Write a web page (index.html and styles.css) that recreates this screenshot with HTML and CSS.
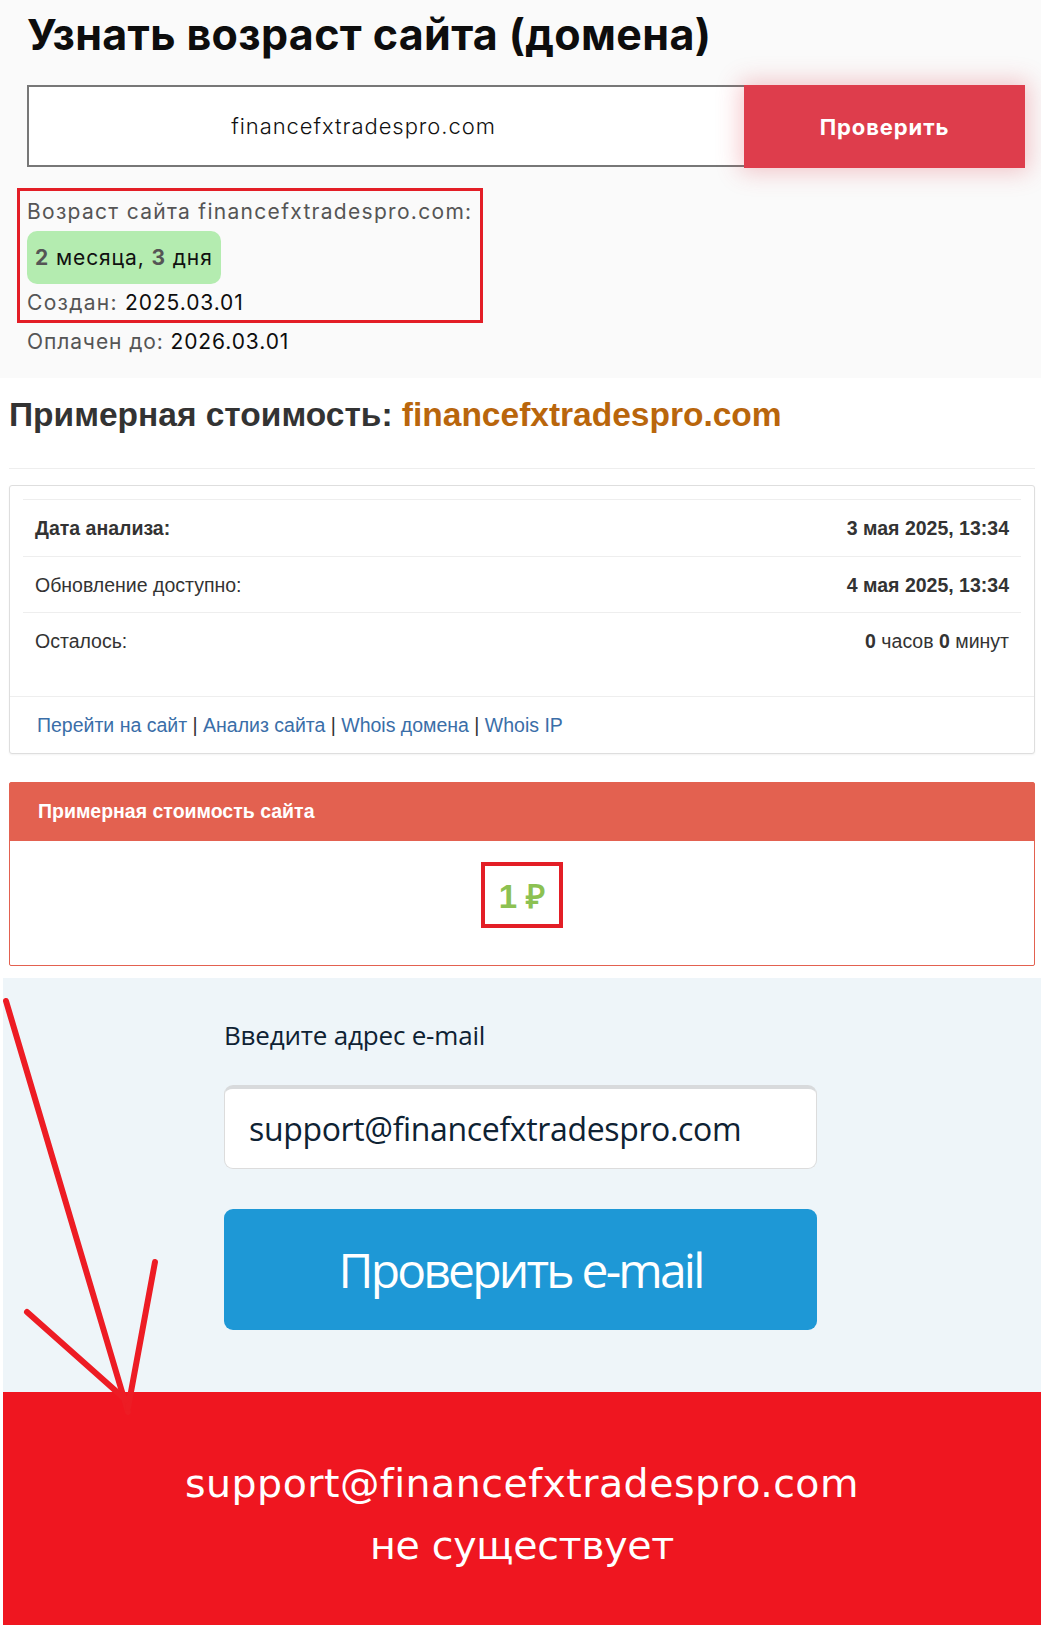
FILE: index.html
```html
<!DOCTYPE html>
<html lang="ru">
<head>
<meta charset="utf-8">
<title>Возраст сайта</title>
<link rel="stylesheet" href="styles.css">
</head>
<body>
<div class="page">
  <section class="age">
    <h1 class="age-title">Узнать возраст сайта (домена)</h1>
    <form class="age-form">
      <div class="age-input">financefxtradespro.com</div>
      <button class="age-btn" type="button">Проверить</button>
    </form>
    <div class="age-result">
      <div class="age-line">Возраст сайта financefxtradespro.com:</div>
      <div class="age-badge"><b>2</b> месяца, <b>3</b> дня</div>
      <div class="age-line">Создан: <span class="val">2025.03.01</span></div>
    </div>
    <div class="age-line age-paid">Оплачен до: <span class="val">2026.03.01</span></div>
  </section>

  <section class="price">
    <h2 class="price-title">Примерная стоимость: <span class="dom">financefxtradespro.com</span></h2>
    <hr class="price-hr">
    <div class="card">
      <div class="card-body">
        <div class="row"><span class="k strong">Дата анализа:</span><span class="v strong">3 мая 2025, 13:34</span></div>
        <div class="row"><span class="k">Обновление доступно:</span><span class="v strong">4 мая 2025, 13:34</span></div>
        <div class="row last"><span class="k">Осталось:</span><span class="v"><b>0</b> часов <b>0</b> минут</span></div>
      </div>
      <div class="card-foot">
        <a href="#">Перейти на сайт</a>&nbsp;|&nbsp;<a href="#">Анализ сайта</a>&nbsp;|&nbsp;<a href="#">Whois домена</a>&nbsp;|&nbsp;<a href="#">Whois IP</a>
      </div>
    </div>
    <div class="panel">
      <div class="panel-head">Примерная стоимость сайта</div>
      <div class="panel-body"><span class="cost">1 ₽</span></div>
    </div>
  </section>

  <section class="email">
    <div class="email-inner">
      <div class="email-label">Введите адрес e-mail</div>
      <div class="email-input">support@financefxtradespro.com</div>
      <button class="email-btn" type="button">Проверить e-mail</button>
    </div>
  </section>

  <section class="verdict">
    <div class="verdict-text"><span class="verdict-email">support@financefxtradespro.com</span><br>не существует</div>
  </section>

  <svg class="arrow" width="200" height="470" viewBox="0 0 200 470" aria-hidden="true">
    <g stroke="#ed1c24" stroke-width="6" stroke-linecap="round" fill="none">
      <path d="M6 41 L128 452"/>
      <path d="M155 302 L128 448"/>
      <path d="M27 352 L126 440"/>
    </g>
  </svg>
</div>
</body>
</html>
```

FILE: styles.css
```css
* { box-sizing: border-box; }
html, body { margin: 0; padding: 0; }
body { background: #fff; }
.page { position: relative; width: 1041px; min-height: 1625px; overflow: hidden; }

/* ---------- age section ---------- */
.age {
  background: #fafafa;
  height: 378px;
  padding: 8px 16px 0 17px;
  font-family: Inter, "Noto Sans", sans-serif;
  color: #222;
}
.age-title {
  margin: 0 0 0 10px;
  font-size: 43px;
  line-height: 52px;
  font-weight: 700;
  color: #0d0d0d;
  letter-spacing: 0.35px;
}
.age-form {
  display: flex;
  margin: 25px 0 0 10px;
  height: 83px;
}
.age-input {
  width: 717px;
  height: 82px;
  border: 2px solid #777;
  border-right: none;
  background: #fff;
  display: flex;
  align-items: center;
  justify-content: center;
  padding-right: 46px;
  font-size: 22px;
  font-weight: 300;
  letter-spacing: 0.95px;
  color: #111;
}
.age-btn {
  width: 281px;
  height: 83px;
  border: none;
  background: #de3d4c;
  color: #fff;
  font-family: Inter, "Noto Sans", sans-serif;
  font-size: 22px;
  font-weight: 700;
  letter-spacing: 0.9px;
  box-shadow: 0 0 22px 4px rgba(222, 61, 76, 0.28);
  padding: 0;
}
.age-result {
  width: 466px;
  margin-top: 20px;
  border: 3px solid #e31e26;
  padding: 5px 0 2px 7px;
}
.age-line {
  font-size: 21px;
  line-height: 31px;
  color: #555;
  font-weight: 400;
  letter-spacing: 1.3px;
}
.age-line .val { color: #0d0d0d; letter-spacing: 0.9px; }
.age-badge {
  display: inline-block;
  margin: 4px 0 3px;
  background: #b4ecb0;
  border-radius: 10px;
  padding: 0 8px;
  height: 53px;
  line-height: 53px;
  font-size: 21px;
  letter-spacing: 0.9px;
  color: #111;
}
.age-badge b { color: #555; font-weight: 700; }
.age-paid { margin: 3px 0 0 10px; letter-spacing: 0.9px; }

/* ---------- price section ---------- */
.price {
  padding: 0 6px 0 9px;
  font-family: "Liberation Sans", Arial, sans-serif;
}
.price-title {
  margin: 0;
  padding-top: 18px;
  font-size: 33.5px;
  line-height: 38px;
  font-weight: 700;
  color: #333;
}
.price-title .dom { color: #b9660c; }
.price-hr {
  margin: 34px 0 0 0;
  border: none;
  border-top: 1px solid #eee;
}
.card {
  margin-top: 16px;
  border: 1px solid #dedede;
  border-radius: 3px;
  box-shadow: 0 1px 2px rgba(0,0,0,0.05);
  background: #fff;
}
.card-body { padding: 13px 13px 0 13px; }
.row {
  display: flex;
  justify-content: space-between;
  align-items: center;
  height: 56.5px;
  border-top: 1px solid #eee;
  padding: 2px 12px 0 12px;
  font-size: 19.5px;
  color: #333;
}
.row.last { height: 84px; align-items: flex-start; padding-top: 17px; }
.strong { font-weight: 700; }
.v b { font-weight: 700; }
.card-foot {
  border-top: 1px solid #eee;
  height: 57px;
  display: flex;
  align-items: center;
  padding-left: 27px;
  font-size: 19.5px;
  color: #333;
}
.card-foot a { color: #3a6ea8; text-decoration: none; }

.panel {
  margin-top: 28px;
  border: 1px solid #e36150;
  border-radius: 2px;
}
.panel-head {
  background: #e36150;
  color: #fff;
  height: 58px;
  line-height: 56px;
  padding-left: 28px;
  font-size: 19.5px;
  font-weight: 700;
}
.panel-body {
  height: 124px;
  display: flex;
  justify-content: center;
  padding-top: 21px;
}
.cost {
  display: inline-flex;
  align-items: center;
  height: 66px;
  padding: 0 14px;
  border: 4px solid #e31e26;
  color: #8cc152;
  font-size: 33px;
  font-weight: 700;
}

/* ---------- email section ---------- */
.email {
  margin: 12px 0 0 3px;
  height: 414px;
  background: #eef5f9;
  padding: 0 0 0 221px;
  font-family: "Open Sans", "Noto Sans", sans-serif;
}
.email-inner { width: 593px; padding-top: 33px; }
.email-label {
  font-size: 26px;
  line-height: 48px;
  color: #0e2233;
  letter-spacing: -0.2px;
}
.email-input {
  margin-top: 26px;
  height: 84px;
  background: #fff;
  border: 1px solid #dcdcdc;
  border-top: 4px solid #d8dadc;
  border-radius: 9px;
  padding-left: 24px;
  display: flex;
  align-items: center;
  font-size: 32px;
  color: #0e2233;
  letter-spacing: -0.35px;
}
.email-btn {
  margin-top: 40px;
  width: 593px;
  height: 121px;
  border: none;
  border-radius: 9px;
  background: #1e98d6;
  color: #fff;
  font-family: "Open Sans", "Noto Sans", sans-serif;
  font-size: 48px;
  letter-spacing: -2.8px;
  padding: 0;
}

/* ---------- verdict ---------- */
.verdict {
  margin-left: 3px;
  height: 234px;
  background: #ef1620;
  display: flex;
  justify-content: center;
  padding-top: 60px;
  font-family: "DejaVu Sans", sans-serif;
}
.verdict-text {
  color: #fff;
  text-align: center;
  font-size: 39.5px;
  line-height: 62px;
  letter-spacing: -0.3px;
}
.verdict-email { letter-spacing: 0.45px; }

/* annotation arrow drawn over content */
.arrow { position: absolute; left: 0; top: 960px; }
```
